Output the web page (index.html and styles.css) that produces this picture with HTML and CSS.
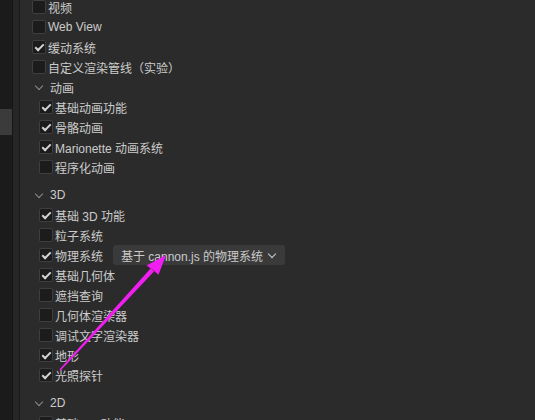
FILE: index.html
```html
<!DOCTYPE html>
<html lang="zh-CN">
<head>
  <meta charset="UTF-8">
  <title>功能裁剪</title>
  <link rel="stylesheet" href="styles.css">
</head>
<body>
  <div class="side"><div class="thumb"></div></div>
  <div class="gutter"></div>

  <div class="panel">
    <div class="list">
      <div class="row"><span class="cb"></span>视频</div>
      <div class="row"><span class="cb"></span>Web View</div>
      <div class="row"><span class="cb on"></span>缓动系统</div>
      <div class="row"><span class="cb"></span>自定义渲染管线（实验）</div>

      <div class="group">
        <div class="head"><span class="chev"></span>动画</div>
        <div class="items">
          <div class="row"><span class="cb on"></span>基础动画功能</div>
          <div class="row"><span class="cb on"></span>骨骼动画</div>
          <div class="row"><span class="cb on"></span>Marionette 动画系统</div>
          <div class="row"><span class="cb"></span>程序化动画</div>
        </div>
      </div>

      <div class="group">
        <div class="head"><span class="chev"></span>3D</div>
        <div class="items">
          <div class="row"><span class="cb on"></span>基础 3D 功能</div>
          <div class="row"><span class="cb"></span>粒子系统</div>
          <div class="row"><span class="cb on"></span>物理系统
            <span class="select">基于 cannon.js 的物理系统<span class="chev"></span></span>
          </div>
          <div class="row"><span class="cb on"></span>基础几何体</div>
          <div class="row"><span class="cb"></span>遮挡查询</div>
          <div class="row"><span class="cb"></span>几何体渲染器</div>
          <div class="row"><span class="cb"></span>调试文字渲染器</div>
          <div class="row"><span class="cb on"></span>地形</div>
          <div class="row"><span class="cb on"></span>光照探针</div>
        </div>
      </div>

      <div class="group">
        <div class="head"><span class="chev"></span>2D</div>
        <div class="items">
          <div class="row"><span class="cb on"></span>基础 2D 功能</div>
        </div>
      </div>
    </div>
  </div>

  <!-- annotation arrow drawn over the list -->
  <svg class="arrow" width="535" height="420" viewBox="0 0 535 420">
    <polygon fill="#f01ef0" points="59.4,369.5 60.6,370.5 154,271.6 150.8,268.2"/>
    <polygon fill="#f01ef0" points="166,255 146.5,265.5 152.3,269.6 158.5,274.8"/>
  </svg>
</body>
</html>
```

FILE: styles.css
```css
body { margin: 0; height: 420px; overflow: hidden; display: flex; background: #2b2b2b; font-family: "Liberation Sans", "Noto Sans CJK SC", sans-serif; font-size: 12px; color: #cbcbcb; position: relative; }
.side { width: 12px; background: #1b1b1b; border-right: 1px solid #161616; flex: none; }
.side .thumb { margin-top: 109px; height: 26px; background: #3b3b3b; }
.gutter { width: 6px; background: #262626; border-right: 1px solid #1a1a1a; flex: none; }
.panel { flex: 1; padding-left: 12px; }
.list { margin-top: -3px; }
.row { height: 20px; display: flex; align-items: center; white-space: nowrap; }
.cb { width: 12px; height: 12px; border: 1px solid #3e3e3e; border-radius: 2px; background: #1c1c1c; margin-right: 2px; flex: none; position: relative; }
.cb.on::after { content: ""; position: absolute; left: 4px; top: 1px; width: 3px; height: 7px; border: solid #d4d4d4; border-width: 0 2px 2px 0; transform: rotate(45deg); }
.group { margin-bottom: 8px; }
.head { height: 20px; display: flex; align-items: center; padding-left: 3px; }
.chev { width: 5px; height: 5px; border: solid #8c8c8c; border-width: 0 1px 1px 0; transform: rotate(45deg); margin: -3px 8px 0 1px; }
.items { padding-left: 7px; }
.select { margin-left: 10px; height: 20px; display: flex; align-items: center; padding: 0 10px 0 8px; background: #3a3a3a; border-radius: 3px; }
.select .chev { border-color: #cfcfcf; margin: -3px 0 0 6px; }
.arrow { position: absolute; left: 0; top: 0; pointer-events: none; }
```
